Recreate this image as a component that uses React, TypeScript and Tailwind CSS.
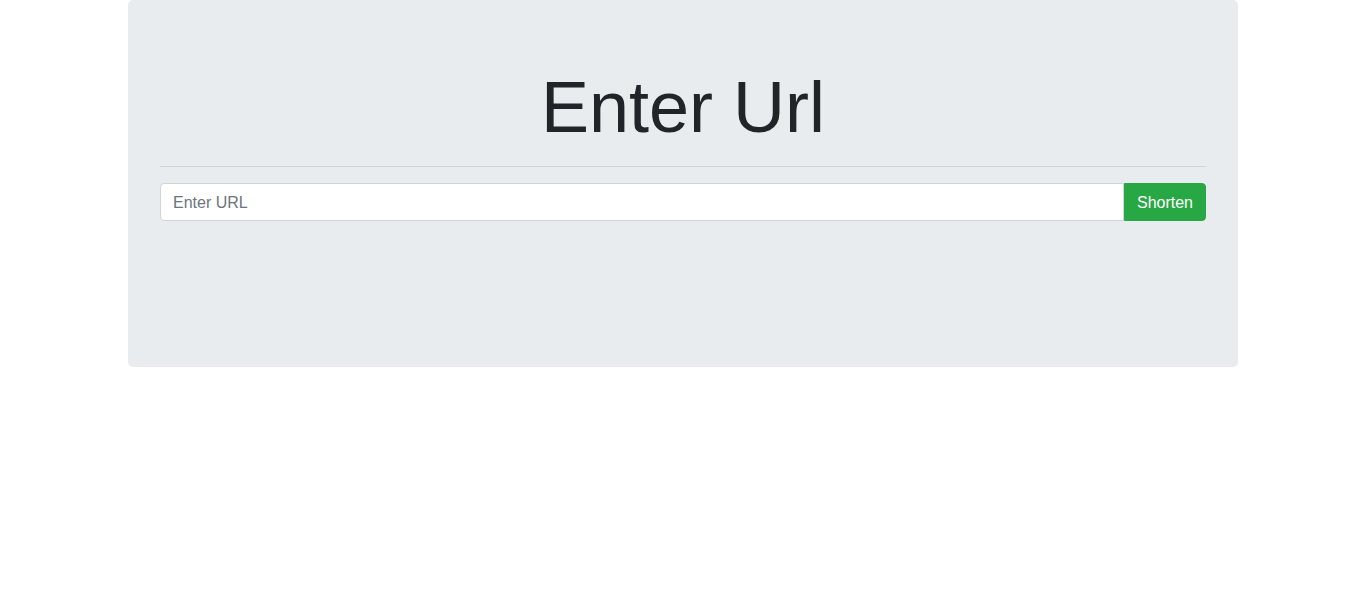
import React from 'react';

export default function App() {
  return (
    <div className="min-h-screen bg-white font-['Liberation_Sans',Arial,sans-serif] text-[#212529]">
      <div className="ml-[128px] w-[1110px]">
        <div className="rounded-[5px] bg-[#e9ecef] px-8 pt-16 pb-[146px]">
          <h1 className="mb-2 text-center text-[72px] font-light leading-[1.2]">Enter Url</h1>
          <hr className="my-4 border-0 border-t border-black/10" />
          <form className="flex" onSubmit={(e) => e.preventDefault()}>
            <input
              type="text"
              placeholder="Enter URL"
              className="h-[38px] flex-1 rounded-l-[4px] border border-[#ced4da] bg-white px-3 pt-[2px] text-base text-[#495057] placeholder-[#6c757d] outline-none"
            />
            <button
              type="submit"
              className="h-[38px] rounded-r-[4px] border border-[#28a745] bg-[#28a745] px-3 pt-[2px] text-base text-white"
            >
              Shorten
            </button>
          </form>
        </div>
      </div>
    </div>
  );
}
